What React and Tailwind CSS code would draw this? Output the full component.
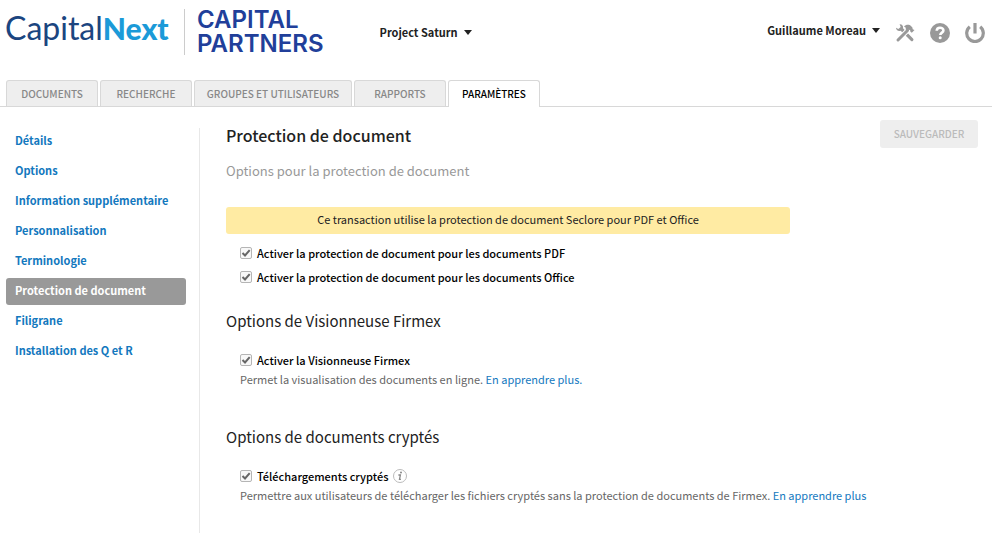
import { useState } from "react"

const tabs = [
  { name: 'Documents', width: 'w-[92px]' },
  { name: 'Recherche', width: 'w-[92px]' },
  { name: 'Groupes et utilisateurs', width: 'w-[158px]' },
  { name: 'Rapports', width: 'w-[92px]' },
  { name: 'Paramètres', width: 'w-[92px]' },
]

const sections = [
  'Détails',
  'Options',
  'Information supplémentaire',
  'Personnalisation',
  'Terminologie',
  'Protection de document',
  'Filigrane',
  'Installation des Q et R',
]

function Caret() {
  return (
    <svg className="w-2 h-[5px]" viewBox="0 0 8 5" aria-hidden="true">
      <path d="M0 0h8L4 5z" fill="#222" />
    </svg>
  )
}

function Tools() {
  return (
    <svg className="w-5 h-5" viewBox="0 0 20 20" aria-hidden="true">
      {/* wrench */}
      <path fill="#999" d="M4.600 1.300C7 1.100 8.600 3 8 5.300L18 15.600a1.500 1.500 0 0 1-2.200 2.200L5.700 7.700C3.300 8.600 1 7 1 4.700L3.300 6l2.400-2z" />
      {/* hammer, cut out where it crosses the wrench */}
      <path stroke="#fff" strokeWidth="5" d="M6.500 13.500 12.500 7.500" />
      <path stroke="#999" strokeWidth="3" strokeLinecap="round" d="M3 17 12.500 7.500" />
      <path fill="#999" d="M9 3.600c2-2.200 5.200-2.300 7.200-.300l1.200 1.200.300 1.700 1.800.800-2.700 2.800-1.500-1.300-.200-1.500-1.600-.300-1.200 1.200-1.900-1.900.700-1z" />
    </svg>
  )
}

function Help() {
  return (
    <svg className="w-5 h-5" viewBox="0 0 20 20" aria-hidden="true">
      <circle cx="10" cy="10" r="10" fill="#999" />
      <path d="M6.700 7.800C6.800 5.600 8.200 4.700 10 4.700c2 0 3.400 1 3.400 2.700 0 2.200-3.100 2.200-3.100 4.600" fill="none" stroke="#fff" strokeWidth="2.600" />
      <circle cx="10.200" cy="14.800" r="1.500" fill="#fff" />
    </svg>
  )
}

function Power() {
  return (
    <svg className="w-5 h-5" viewBox="0 0 20 20" fill="none" stroke="#999" aria-hidden="true">
      <path d="M4.800 3.800a8.300 8.300 0 1 0 10.400 0" strokeWidth="3.200" />
      <path d="M10 0v10.500" strokeWidth="3.200" />
    </svg>
  )
}

function Info() {
  return (
    <svg className="w-[14px] h-[14px]" viewBox="0 0 14 14" aria-hidden="true">
      <circle cx="7" cy="7" r="6.500" fill="#fff" stroke="#bbb" />
      <circle cx="8" cy="3.600" r="1" fill="#888" />
      <path d="M5.400 6h2L6.500 10.400h1.400" fill="none" stroke="#888" strokeWidth="1.300" />
    </svg>
  )
}

function Check({ id, label, children }) {
  return (
    <div className="flex items-center gap-[5px] h-6">
      <span className="grid w-3 h-3">
        <input type="checkbox" id={id} defaultChecked className="peer appearance-none col-start-1 row-start-1 w-3 h-3 border border-[#b5b5b5] rounded-[2px] bg-[#f8f8f8]" />
        <svg className="hidden peer-checked:block pointer-events-none col-start-1 row-start-1 w-3 h-3" viewBox="0 0 12 12" fill="none" stroke="#666" strokeWidth="2" aria-hidden="true">
          <path d="M2.500 6 5 8.500 9.700 3.200" />
        </svg>
      </span>
      <label htmlFor={id} className="font-medium text-black">{label}</label>
      {children}
    </div>
  )
}

export default function App() {
  let [tab, setTab] = useState('Paramètres')
  let [section, setSection] = useState('Protection de document')

  return (
    <div className="flex flex-col min-h-screen bg-white text-[11px] leading-4 text-[#222] font-['Noto_Sans_CJK_SC',sans-serif]">
      <header className="flex items-start h-20 pl-[5px] pr-[7px]">
        <div className="flex items-center pt-2">
          <div className="w-[180px] border-r border-[#ccc] h-[46px] leading-[38px] font-['Lato',sans-serif] whitespace-nowrap">
            <span className="text-[32px] font-normal text-[#1b4580]">Capital</span>
            <span className="text-[30px] font-black text-[#1b9ad8]">Next</span>
          </div>
          <div className="pl-3 text-[24px] leading-6 font-semibold text-[#213f9a] font-['Inter',sans-serif]">
            CAPITAL<br />PARTNERS
          </div>
        </div>
        <button className="flex items-center gap-[6px] mt-6 ml-14 font-bold">Project Saturn <Caret /></button>
        <div className="flex items-start gap-[15px] ml-auto">
          <button className="flex items-center gap-[6px] mt-[22px] font-bold">Guillaume Moreau <Caret /></button>
          <button className="mt-[23px]" aria-label="Outils"><Tools /></button>
          <button className="mt-[23px]" aria-label="Aide"><Help /></button>
          <button className="mt-[23px]" aria-label="Déconnexion"><Power /></button>
        </div>
      </header>

      <nav className="flex gap-[2px] h-[27px] pl-[6px] border-b border-[#d8d8d8]">
        {tabs.map(t => (
          <button key={t.name} onClick={() => setTab(t.name)}
            className={`${t.width} border border-b-0 border-[#d8d8d8] rounded-t-[3px] uppercase text-[10px] font-medium ${tab === t.name ? 'h-[27px] bg-white text-black' : 'h-[26px] bg-[#eee] text-[#888]'}`}>
            {t.name}
          </button>
        ))}
      </nav>

      <div className="flex grow pt-[21px]">
        <aside className="w-[200px] shrink-0 pl-[6px] pr-[13px] border-r border-[#e8e8e8]">
          <ul className="flex flex-col gap-[3px]">
            {sections.map(s => (
              <li key={s}>
                <a href="#" onClick={() => setSection(s)}
                  className={`block h-[27px] pl-[9px] leading-6 rounded-[3px] font-bold ${section === s ? 'bg-[#999] text-white' : 'text-[#1378be]'}`}>
                  {s}
                </a>
              </li>
            ))}
          </ul>
        </aside>

        <main className="grow pl-[26px] pr-[14px]">
          <div className="flex justify-between items-start">
            <h1 className="text-[16px] leading-[14px] font-medium">Protection de document</h1>
            <button className="w-[98px] h-7 -mt-2 rounded-[3px] bg-[#eee] text-[#bbb] text-[10px] font-medium uppercase">Sauvegarder</button>
          </div>
          <p className="pt-[11px] text-[13px] leading-6 text-[#999]">Options pour la protection de document</p>

          <div className="max-w-[564px] h-[27px] mt-6 rounded-[3px] bg-[#ffeba3] text-center leading-6">
            Ce transaction utilise la protection de document Seclore pour PDF et Office
          </div>
          <div className="pl-[14px] pt-[7px]">
            <Check id="pdf" label="Activer la protection de document pour les documents PDF" />
            <Check id="office" label="Activer la protection de document pour les documents Office" />
          </div>

          <h2 className="mt-5 text-[15px] leading-6">Options de Visionneuse Firmex</h2>
          <div className="pl-[14px] pt-[15px]">
            <Check id="viewer" label="Activer la Visionneuse Firmex" />
            <p className="text-[#666] leading-[14px]">
              Permet la visualisation des documents en ligne. <a href="#" className="text-[#1378be]">En apprendre plus.</a>
            </p>
          </div>

          <h2 className="mt-[39px] text-[15px] leading-6">Options de documents cryptés</h2>
          <div className="pl-[14px] pt-[15px]">
            <Check id="downloads" label="Téléchargements cryptés"><Info /></Check>
            <p className="text-[#666] leading-[14px]">
              Permettre aux utilisateurs de télécharger les fichiers cryptés sans la protection de documents de Firmex. <a href="#" className="text-[#1378be]">En apprendre plus</a>
            </p>
          </div>
        </main>
      </div>
    </div>
  )
}
